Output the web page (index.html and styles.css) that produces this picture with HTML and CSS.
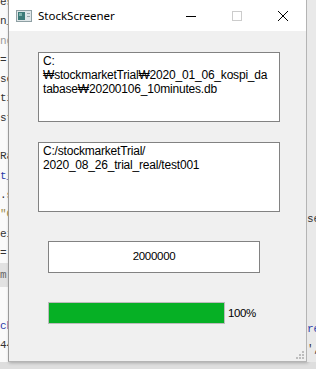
FILE: index.html
```html
<!DOCTYPE html>
<html lang="ko">
<head>
    <meta charset="UTF-8">
    <meta name="viewport" content="width=device-width, initial-scale=1.0">
    <title>StockScreener</title>
    <link rel="stylesheet" href="styles.css">
</head>
<body>

<div class="desk">
    <!-- editor behind the window, left side -->
    <div class="editor editor-left">
        <div class="code-line">es</div>
        <div class="code-line">n_</div>
        <div class="code-line faint">ng</div>
        <div class="code-line">=</div>
        <div class="code-line">se</div>
        <div class="code-line">ti</div>
        <div class="code-line">st</div>
        <div class="code-line"></div>
        <div class="code-line">Ra</div>
        <div class="code-line blue">t_</div>
        <div class="code-line">.s</div>
        <div class="code-line olive">"C</div>
        <div class="code-line">ei</div>
        <div class="code-line">=</div>
        <div class="code-line band">m</div>
        <div class="code-line gap"></div>
        <div class="code-line blue">ch</div>
        <div class="code-line">44</div>
    </div>

    <div class="window">
        <div class="titlebar">
            <svg class="app-icon" width="16" height="12" viewBox="0 0 16 12">
                <rect x="0.5" y="0.5" width="15" height="11" fill="#dfe6e8" stroke="#8fa0a4"/>
                <rect x="2" y="2" width="7" height="8" fill="#3c7a78"/>
                <rect x="3" y="3" width="3" height="3" fill="#7fb3ad"/>
                <rect x="11" y="3" width="3" height="1" fill="#9aa9ad"/>
                <rect x="11" y="6" width="3" height="1" fill="#9aa9ad"/>
            </svg>
            <span class="title">StockScreener</span>
            <div class="caption-buttons">
                <span class="cap-btn">
                    <svg width="10" height="10" viewBox="0 0 10 10"><path d="M0 5.5H10" stroke="#000" stroke-width="1"/></svg>
                </span>
                <span class="cap-btn">
                    <svg width="10" height="10" viewBox="0 0 10 10"><rect x="0.5" y="0.5" width="9" height="9" fill="none" stroke="#cccccc"/></svg>
                </span>
                <span class="cap-btn">
                    <svg width="10" height="10" viewBox="0 0 10 10"><path d="M0 0L10 10M10 0L0 10" stroke="#000" stroke-width="1"/></svg>
                </span>
            </div>
        </div>

        <div class="client">
            <div class="text-edit">C:<br>₩stockmarketTrial₩2020_01_06_kospi_da<br>tabase₩20200106_10minutes.db</div>
            <div class="text-edit">C:/stockmarketTrial/<br>2020_08_26_trial_real/test001</div>
            <div class="line-edit">2000000</div>
            <div class="progress-row">
                <div class="progress"><div class="chunk" style="width:100%"></div></div>
                <span class="pct">100%</span>
            </div>
            <svg class="grip" width="8" height="8" viewBox="0 0 8 8">
                <rect x="6" y="0" width="2" height="2" fill="#bdbdbd"/>
                <rect x="3" y="3" width="2" height="2" fill="#bdbdbd"/>
                <rect x="6" y="3" width="2" height="2" fill="#bdbdbd"/>
                <rect x="0" y="6" width="2" height="2" fill="#bdbdbd"/>
                <rect x="3" y="6" width="2" height="2" fill="#bdbdbd"/>
                <rect x="6" y="6" width="2" height="2" fill="#bdbdbd"/>
            </svg>
        </div>
    </div>

    <!-- editor behind the window, right side -->
    <div class="editor editor-right">
        <div class="code-line tall"></div>
        <div class="code-line">se</div>
        <div class="code-line tall2"></div>
        <div class="code-line blue">re</div>
        <div class="code-line">',</div>
    </div>
</div>

</body>
</html>
```

FILE: styles.css
```css
body {
    margin: 0;
    padding: 0;
    width: 316px;
    height: 369px;
    overflow: hidden;
    font-family: 'Liberation Sans', Arial, sans-serif;
    color: #000;
}
.desk {
    display: flex;
    align-items: flex-start;
    width: 316px;
    height: 369px;
    background-color: #dedede;
}
.editor {
    height: 362px;
    overflow: hidden;
    background-color: #fafafa;
    font-family: 'Liberation Mono', monospace;
    font-size: 11px;
    color: #333;
}
.editor-left {
    width: 8px;
    flex: none;
}
.editor-left .code-line:first-child {
    margin-top: -7px;
}
.editor-right {
    width: 9px;
    flex: none;
    background-color: #e9e9e9;
}
.code-line {
    height: 19.3px;
    line-height: 19.3px;
    white-space: nowrap;
    overflow: hidden;
}
.code-line.faint {
    color: #999;
}
.code-line.blue {
    color: #2b3aa8;
}
.code-line.olive {
    color: #9a8a4a;
}
.code-line.band {
    height: 24px;
    line-height: 24px;
    background-color: #e2e2e2;
    color: #666;
}
.code-line.gap {
    height: 30px;
}
.code-line.tall {
    height: 210px;
}
.code-line.tall2 {
    height: 91px;
}

/* the Qt window */
.window {
    width: 299px;
    height: 362px;
    flex: none;
    box-sizing: border-box;
    border-left: 1px solid #9a9a9a;
    border-right: 1px solid #b4b4b4;
    border-bottom: 1px solid #b4b4b4;
    box-shadow: 1px 1px 3px rgba(0, 0, 0, 0.25);
    display: flex;
    flex-direction: column;
    background-color: #f0f0f0;
}
.titlebar {
    height: 31px;
    flex: none;
    background-color: #fff;
    display: flex;
    align-items: center;
}
.app-icon {
    margin-left: 7px;
    margin-top: 1px;
}
.title {
    margin-left: 6px;
    font-family: 'Noto Sans', sans-serif;
    font-size: 11.5px;
    color: #000;
}
.caption-buttons {
    margin-left: auto;
    display: flex;
    height: 31px;
}
.cap-btn {
    width: 46px;
    height: 31px;
    display: flex;
    align-items: center;
    justify-content: center;
}
.client {
    flex: 1;
    display: flex;
    flex-direction: column;
    padding: 21px 0 0 29px;
    font-size: 12px;
}
.text-edit {
    width: 242px;
    height: 70px;
    box-sizing: border-box;
    border: 1px solid #828282;
    background-color: #fff;
    padding: 1px 4px;
    line-height: 14px;
    letter-spacing: -0.2px;
    white-space: nowrap;
    overflow: hidden;
    margin-bottom: 20px;
}
.line-edit {
    width: 212px;
    height: 32px;
    box-sizing: border-box;
    margin-top: 9px;
    margin-left: 10px;
    border: 1px solid #828282;
    background-color: #fff;
    font-size: 11.5px;
    letter-spacing: -0.3px;
    text-align: center;
    line-height: 29px;
}
.progress-row {
    display: flex;
    align-items: center;
    margin-top: 29px;
    margin-left: 10px;
}
.progress {
    width: 177px;
    height: 22px;
    box-sizing: border-box;
    border: 1px solid #bcbcbc;
    background-color: #e6e6e6;
}
.chunk {
    height: 100%;
    background-color: #06b025;
}
.pct {
    margin-left: 3px;
    font-size: 11.5px;
    letter-spacing: -0.4px;
}
.grip {
    margin-top: auto;
    margin-bottom: 2px;
    margin-right: 2px;
    align-self: flex-end;
}
```
